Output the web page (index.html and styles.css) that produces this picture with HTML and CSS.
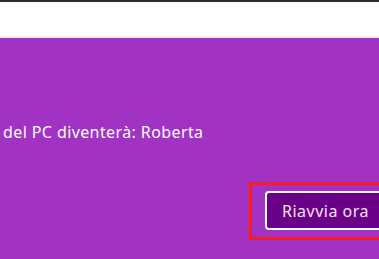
FILE: index.html
```html
<!DOCTYPE html>
<html lang="it">
<head>
    <meta charset="UTF-8">
    <meta name="viewport" content="width=device-width, initial-scale=1.0">
    <title>Rinomina PC</title>
    <link rel="stylesheet" href="styles.css">
</head>
<body>
    <div class="topbar"></div>
    <div class="header"></div>
    <div class="panel">
        <p class="message">del PC diventerà: Roberta</p>
        <div class="actions">
            <div class="highlight">
                <button class="restart">Riavvia ora</button>
            </div>
        </div>
    </div>
</body>
</html>
```

FILE: styles.css
```css
html {
    overflow: hidden;
}

body {
    margin: 0;
    font-family: "Noto Sans", "Open Sans", sans-serif;
    height: 259px;
    background-color: #a232c4;
}

.topbar {
    height: 2px;
    background-color: #2e2e2e;
}

.header {
    height: 34px;
    background-color: #fff;
    border-bottom: 2px solid #ececec;
}

.panel {
    background-color: #a232c4;
    color: #fff;
    padding-top: 84px;
    overflow: hidden;
}

.message {
    margin: 0;
    padding-left: 3px;
    font-size: 16px;
    line-height: 20px;
    letter-spacing: 0.4px;
}

.actions {
    display: flex;
    margin-top: 40px;
    margin-left: 249px;
    white-space: nowrap;
}

.highlight {
    flex: none;
    border: 3px solid #ff1a1a;
    padding: 6px 13px 7px;
}

.restart {
    font-family: inherit;
    font-size: 16px;
    letter-spacing: 0.5px;
    color: #f4e6f8;
    background-color: #6a0087;
    border: 2px solid #fff;
    border-radius: 4px;
    height: 39px;
    padding: 0 15px;
}
```
